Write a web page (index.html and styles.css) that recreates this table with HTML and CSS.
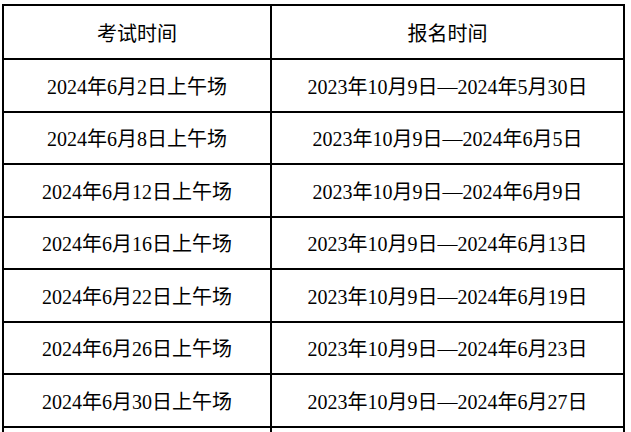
FILE: index.html
```html
<!DOCTYPE html>
<html lang="zh">
<head>
<meta charset="utf-8">
<link rel="stylesheet" href="styles.css">
</head>
<body>
<table class="schedule">
  <colgroup><col class="c1"><col class="c2"></colgroup>
  <thead>
    <tr><th>考试时间</th><th>报名时间</th></tr>
  </thead>
  <tbody>
    <tr><td>2024年6月2日上午场</td><td>2023年10月9日—2024年5月30日</td></tr>
    <tr><td>2024年6月8日上午场</td><td>2023年10月9日—2024年6月5日</td></tr>
    <tr><td>2024年6月12日上午场</td><td>2023年10月9日—2024年6月9日</td></tr>
    <tr><td>2024年6月16日上午场</td><td>2023年10月9日—2024年6月13日</td></tr>
    <tr><td>2024年6月22日上午场</td><td>2023年10月9日—2024年6月19日</td></tr>
    <tr><td>2024年6月26日上午场</td><td>2023年10月9日—2024年6月23日</td></tr>
    <tr><td>2024年6月30日上午场</td><td>2023年10月9日—2024年6月27日</td></tr>
    <tr class="more"><td></td><td></td></tr>
  </tbody>
</table>
</body>
</html>
```
FILE: styles.css
```css
html, body {
  margin: 0;
  padding: 0;
  background: #fff;
}
.schedule {
  margin: 4px 0 0 2px;
  width: 623px;
  border-collapse: collapse;
  border: 2px solid #000;
  table-layout: fixed;
  font-family: "Liberation Serif", "Noto Sans CJK SC", serif;
  font-size: 20px;
  color: #000;
}
.c1 { width: 268px; }
.schedule th,
.schedule td {
  border: 2px solid #000;
  padding: 0;
  text-align: center;
  vertical-align: middle;
  font-weight: normal;
  white-space: nowrap;
}
.schedule th {
  height: 52px;
}
.schedule td {
  height: 50.5px;
}
```
